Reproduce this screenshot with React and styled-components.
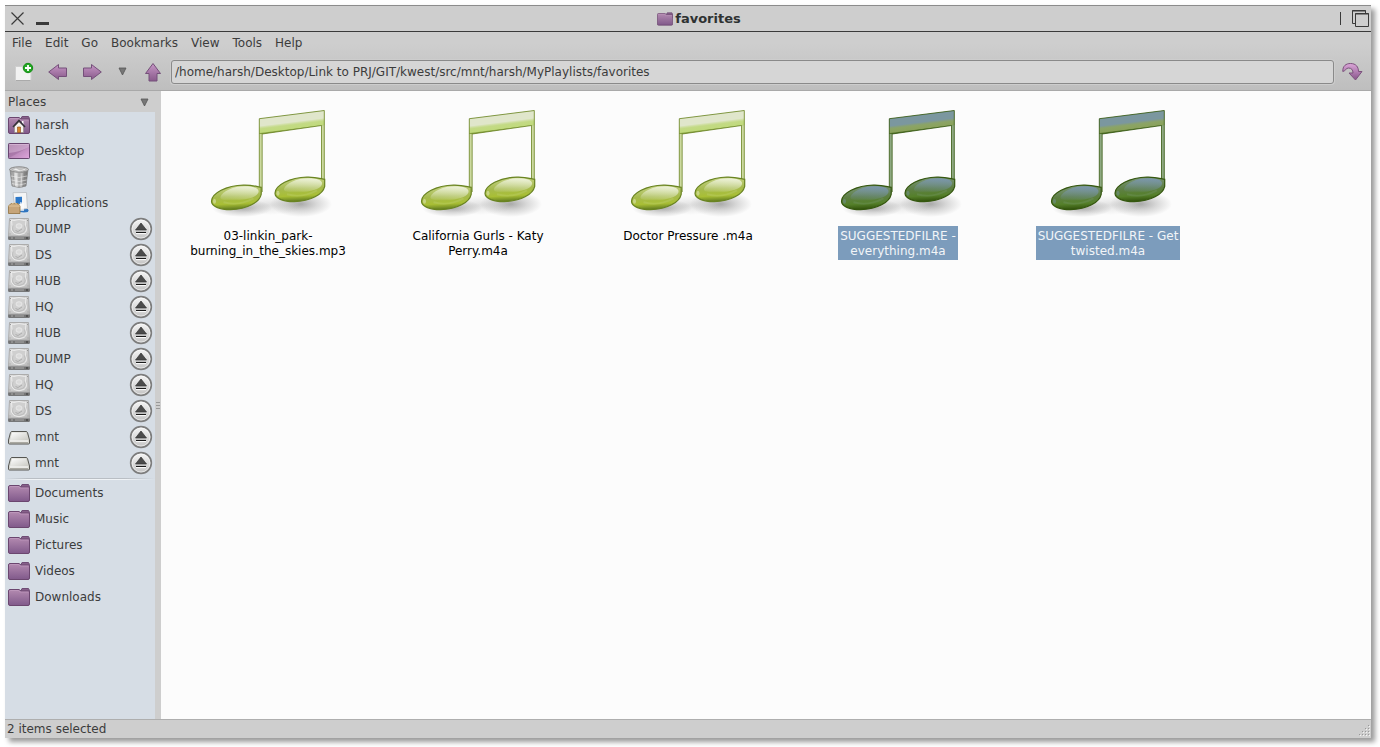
import React, { useId } from "react";
import styled, { createGlobalStyle } from "styled-components";

const GlobalStyle = createGlobalStyle`
  *, *::before, *::after { box-sizing: border-box; }
  body {
    margin: 0;
    background: #fff;
    color: #3c3c3c;
    font: 12px/15px "DejaVu Sans", Verdana, sans-serif;
  }
  button, input { font: inherit; color: inherit; }
`;

const Desktop = styled.div`
  display: flex;
  min-height: 100vh;
  padding: 5px 9px 9px 5px;
`;

const Window = styled.main`
  flex: 1;
  min-width: 0;
  display: flex;
  flex-direction: column;
  background: #cecece;
  box-shadow: 4px 4px 5px rgba(0, 0, 0, 0.4);
`;

const TitleBar = styled.header`
  display: flex;
  align-items: center;
  height: 27px;
  border-top: 1px solid #8c8c8c;
  border-bottom: 1px solid #3a3a3a;
`;

const WindowControls = styled.div`
  display: flex;
  align-items: center;
  flex: none;
  width: ${(p) => p.$width};
`;

const IconButton = styled.button`
  display: flex;
  align-items: center;
  justify-content: center;
  flex: none;
  width: ${(p) => p.$width || "25px"};
  height: ${(p) => p.$height || "24px"};
  padding: 0;
  border: 0;
  background: none;
`;

const Title = styled.h1`
  flex: 1;
  display: flex;
  align-items: center;
  justify-content: center;
  gap: 2px;
  margin: 0;
  font-size: 13px;
  line-height: 16px;
  font-weight: bold;
  color: #2e3232;
`;

const Chrome = styled.div`
  background: linear-gradient(#cecece 20%, #bebebe);
  border-bottom: 1px solid #a9a9a9;
`;

const MenuBar = styled.nav`
  display: flex;
  height: 22px;
  padding-left: 1px;
`;

const MenuButton = styled.button`
  padding: 0 7px 0 6px;
  border: 0;
  background: none;
`;

const ToolBar = styled.div`
  display: flex;
  align-items: center;
  height: 36px;
  padding: 0 0 1px 2px;
`;

const PathInput = styled.input`
  flex: 1;
  min-width: 0;
  height: 24px;
  margin-left: 1px;
  padding: 0 3px;
  border: 1px solid #8a8a8a;
  border-radius: 3px;
  background: #d6d6d6;
  outline: 0;
  box-shadow: 0 0 0 1px #cdcdcd;
`;

const Content = styled.div`
  flex: 1;
  display: flex;
`;

const SidePane = styled.aside`
  flex: none;
  width: 156px;
  display: flex;
  flex-direction: column;
`;

const SideHeader = styled.div`
  display: flex;
  align-items: center;
  justify-content: space-between;
  height: 21px;
  padding: 1px 4px 0 3px;
`;

const SideBody = styled.div`
  flex: 1;
  display: flex;
`;

const Places = styled.ul`
  flex: 1;
  margin: 0;
  padding: 0;
  list-style: none;
  background: #d6dde5;
`;

const PlaceRow = styled.li`
  display: flex;
  align-items: center;
  height: 26px;
  padding: 0 2px 0 3px;
`;

const PlaceLink = styled.a`
  flex: 1;
  display: flex;
  align-items: center;
  gap: 5px;
  color: inherit;
  text-decoration: none;
`;

const PlaceSeparator = styled.li`
  height: 4px;
  padding-top: 2px;

  &::before {
    content: "";
    display: block;
    height: 2px;
    background: linear-gradient(90deg, transparent, #b9bec4 15%, #b9bec4 80%, transparent) top / 100% 1px no-repeat,
      linear-gradient(90deg, transparent, #f0f3f6 15%, #f0f3f6 80%, transparent) bottom / 100% 1px no-repeat;
  }
`;

const Splitter = styled.div`
  width: 6px;
  display: flex;
  flex-direction: column;
  align-items: center;
  justify-content: center;
  gap: 2px;
  padding-bottom: 20px;
`;

const Grip = styled.span`
  width: 4px;
  height: 1px;
  background: #999;
`;

const Files = styled.ul`
  flex: 1;
  display: flex;
  flex-wrap: wrap;
  align-content: flex-start;
  margin: 0;
  padding: 7px 2px;
  list-style: none;
  background: #fcfcfc;
`;

const FileItem = styled.li`
  width: 210px;
  display: flex;
  flex-direction: column;
  align-items: center;
`;

const FileLabel = styled.span`
  padding: 3px 2px 1px;
  text-align: center;
  white-space: pre-line;
  color: ${(p) => (p.$selected ? "#f2f5f8" : "#000")};
  background: ${(p) => (p.$selected ? "#7c9cbc" : "transparent")};
`;

const StatusBar = styled.footer`
  display: flex;
  align-items: center;
  justify-content: space-between;
  height: 19px;
  padding-left: 2px;
  border-top: 1px solid #aeaeae;
`;

function Folder({ size = 22, home }) {
  const id = useId();
  return (
    <svg width={size} height={size} viewBox="0 0 22 22" aria-hidden="true">
      <defs>
        <linearGradient id={id} x1="0" y1="0" x2="0" y2="1">
          <stop offset="0" stopColor="#b48bb1" />
          <stop offset="1" stopColor="#80598a" />
        </linearGradient>
      </defs>
      <path d="M12.5 5.500 14 2.500h6.500l1 2V9h-9z" fill="#87608a" stroke="#6f4d75" />
      <path d="M.5 5Q.5 3.500 2 3.500H11L13 5H20.500Q21.500 5 21.500 6V18Q21.500 19.500 20 19.500H2Q.5 19.500.5 18Z" fill={`url(#${id})`} stroke="#6b466f" />
      <path d="M1.500 5.500Q1.500 4.500 2.500 4.500H10.500L12.500 6H20.500" fill="none" stroke="#c9a6c8" strokeOpacity=".5" />
      {home && (
        <g>
          <path d="M7 12 11 8l4.500 4v6.500H6.500V12z" fill="#f5f3ee" stroke="#8d8780" strokeWidth=".6" />
          <path d="M14 7h1.500v4H14z" fill="#fff" />
          <path d="m5 13 6-6.500 6 6.500" fill="none" stroke="#35333a" strokeWidth="1.600" />
          <path d="M9.500 13h3v5.500h-3z" fill="#d9842c" stroke="#8a4b12" strokeWidth=".6" />
        </g>
      )}
    </svg>
  );
}

function DesktopIcon() {
  const id = useId();
  return (
    <svg width="22" height="22" viewBox="0 0 22 22" aria-hidden="true">
      <defs>
        <linearGradient id={id} x1="0" y1="0" x2="1" y2="1">
          <stop offset="0" stopColor="#a678a5" />
          <stop offset=".5" stopColor="#bb8abb" />
          <stop offset="1" stopColor="#e0a5dd" />
        </linearGradient>
      </defs>
      <rect x=".5" y="3.500" width="21" height="15" rx=".8" fill={`url(#${id})`} stroke="#694670" />
      <path d="M1 4h20v3Q12 12 1 13z" fill="#fff" opacity=".18" />
      <path d="M1 13Q12 12 21 7L1 18z" fill="#7a4a80" opacity=".25" />
      <path d="M1.500 4.500h19" stroke="#d9b9d8" opacity=".8" />
    </svg>
  );
}

function TrashIcon() {
  const id = useId();
  return (
    <svg width="22" height="22" viewBox="0 0 22 22" aria-hidden="true">
      <defs>
        <linearGradient id={id}>
          <stop offset="0" stopColor="#888" />
          <stop offset=".3" stopColor="#dcdcdc" />
          <stop offset=".6" stopColor="#b0b0b0" />
          <stop offset="1" stopColor="#6c6c6c" />
        </linearGradient>
      </defs>
      <path d="M2 3.500 4 20Q11 23 18 20L20 3.500Z" fill={`url(#${id})`} stroke="#808080" strokeWidth=".7" />
      <path d="M5 6 6.500 20M11 7v14M17 6l-1.500 14" fill="none" stroke="#777" strokeWidth=".8" opacity=".6" />
      <path d="M8 7 9 21M14 7l-1 14M3 10q8 3 16 0M3.500 14q7.500 3 15 0M4 17.500q7 3 14 0" fill="none" stroke="#f2f2f2" strokeWidth=".8" opacity=".7" />
      <ellipse cx="11" cy="3.500" rx="9.500" ry="2.700" fill="#c4c4c4" stroke="#8a8a8a" />
      <path d="M4 3.500 8 2l4 2 5-1.500 1 1.500-7 1.500z" fill="#efefef" stroke="#a5a5a5" strokeWidth=".5" />
    </svg>
  );
}

function ApplicationsIcon() {
  return (
    <svg width="22" height="22" viewBox="0 0 22 22" aria-hidden="true">
      <ellipse cx="16" cy="18.500" rx="5" ry="2.500" fill="#2f75c0" stroke="#dfe7ef" />
      <path d="M5 .7 18.500.5 19.500 16.500 7 18z" fill="#f4f5f6" stroke="#c1c5ca" />
      <path d="m7.500 5 6.500-.3v7l-6.500.3z" fill="#2d78c8" />
      <path d="m12 10 4 1v8h-4z" fill="#fdfdfd" opacity=".7" />
      <path d="M.5 14 3 11.500h7l2 2.500v7.500H.5z" fill="#c6a57a" stroke="#91713f" strokeWidth=".8" />
      <path d="M.5 14H12M3.500 12Q6.500 9.500 9 12" fill="none" stroke="#e8cfa5" strokeWidth=".8" />
    </svg>
  );
}

function DriveIcon() {
  const id = useId();
  return (
    <svg width="22" height="22" viewBox="0 0 22 22" aria-hidden="true">
      <defs>
        <linearGradient id={id} x1="0" y1="0" x2="1" y2="1">
          <stop offset="0" stopColor="#dcdcdc" />
          <stop offset="1" stopColor="#bdbdbd" />
        </linearGradient>
      </defs>
      <path d="M.5 18.500h21V21q0 .7-.7.7H1.200Q.5 21.700.5 21z" fill="#747474" stroke="#606060" strokeWidth=".6" />
      <path d="M1.500.5h19l1 17.500H.5z" fill={`url(#${id})`} stroke="#acacac" />
      <path d="M3.500 2Q6 3 8 2q3-1 6 0 3 1 4 0l-.5 5.500Q20 13 16 15.500q-5 2.500-10 0Q2 12.500 4 7.500z" fill="#cfcfcf" stroke="#efefef" strokeWidth=".9" />
      <path d="M5 7.500q-1.500 5 2 7 4.500 2 8.500-.5 3-3 1-6.500" fill="none" stroke="#b3b3b3" strokeWidth=".7" />
      <ellipse cx="11" cy="8" rx="3" ry="2.300" fill="#dadada" stroke="#eee" strokeWidth=".7" />
      <path d="m7.500 12.500 2.500 1 4-2.500" fill="none" stroke="#a8a8a8" strokeWidth=".9" />
      <path d="M3 20h2M7 20h9" stroke="#a9a9a9" />
      <path d="M18 20h2" stroke="#333" />
      <path d="M2 2.500h1M19 2.500h1M1.500 16h1M19.500 16h1" stroke="#979797" />
    </svg>
  );
}

function MountIcon() {
  const id = useId();
  return (
    <svg width="22" height="22" viewBox="0 0 22 22" aria-hidden="true">
      <defs>
        <linearGradient id={id} x1="0" y1="0" x2="1" y2="1">
          <stop offset="0" stopColor="#fff" />
          <stop offset="1" stopColor="#c9c9c3" />
        </linearGradient>
      </defs>
      <path d="M4 5.500H18q1 0 1.500 1l2 7.500v3q0 1-1 1h-19q-1 0-1-1v-3l2-7.500q.5-1 1.500-1z" fill="#d5d5cf" stroke="#565652" />
      <path d="M4 6.500h14l2 8H2z" fill={`url(#${id})`} />
      <path d="M2 15h18" stroke="#fff" />
      <path d="M2 16.500h18" stroke="#aaa9a2" />
    </svg>
  );
}

function EjectIcon() {
  const id = useId();
  return (
    <svg width="24" height="24" viewBox="0 0 24 24" aria-hidden="true">
      <defs>
        <linearGradient id={id} x1="0" y1="0" x2="0" y2="1">
          <stop offset="0" stopColor="#f6f6f6" />
          <stop offset="1" stopColor="#c3c3c3" />
        </linearGradient>
      </defs>
      <circle cx="12" cy="12" r="10.300" fill={`url(#${id})`} stroke="#7d7d7d" strokeWidth="1.700" />
      <circle cx="12" cy="12" r="9" fill="none" stroke="#fff" opacity=".5" />
      <path d="m12 6 5.500 7h-11z" fill="#4b4b4b" stroke="#333" strokeWidth=".7" />
      <path d="M7 15.500h10" stroke="#1b1b1b" strokeWidth="1.200" />
      <path d="M7 16.600h10" stroke="#fff" />
    </svg>
  );
}

function ArrowIcon({ direction }) {
  const id = useId();
  const paths = {
    left: "M.7 10 10.500 2.500V6H18.500V14.500H10.500V17.500z",
    right: "M19.300 10 9.500 2.500V6H1.500V14.500H9.500V17.500z",
    up: "M10 1.500 17.500 11.500H14V19H6V11.500H2.500z",
  };
  return (
    <svg width="20" height="20" viewBox="0 0 20 20" aria-hidden="true">
      <defs>
        <linearGradient id={id} x1="0" y1="0" x2="0" y2="1">
          <stop offset="0" stopColor="#c697c5" />
          <stop offset="1" stopColor="#895a8b" />
        </linearGradient>
      </defs>
      <path d={paths[direction]} fill={`url(#${id})`} stroke="#75507a" strokeLinejoin="round" />
    </svg>
  );
}

function NewTabIcon() {
  return (
    <svg width="22" height="22" viewBox="0 0 22 22" aria-hidden="true">
      <path d="M2.500 5.500h7L10.500 8H18v10.500q0 1-1 1H3.500q-1 0-1-1z" fill="#f2f2f2" stroke="#cfcfcf" />
      <path d="M3 19.500h14.500" stroke="#aaa" />
      <circle cx="15" cy="7" r="4.700" fill="#21a821" stroke="#158b15" />
      <path d="M15 4v6M12 7h6" stroke="#fff" strokeWidth="1.800" />
    </svg>
  );
}

function GoIcon() {
  const id = useId();
  return (
    <svg width="22" height="22" viewBox="0 0 22 22" aria-hidden="true">
      <defs>
        <linearGradient id={id} x1="0" y1="0" x2="0" y2="1">
          <stop offset="0" stopColor="#dca7d9" />
          <stop offset="1" stopColor="#865489" />
        </linearGradient>
      </defs>
      <path d="M.8 10.500C.5 5 4 2.500 8.500 2.500c5.500 0 8 3.500 8 8H20L13.500 19 7 12h4c0-3-1.500-5-4.500-5C4 7 3.500 10 .8 10.500z" fill={`url(#${id})`} stroke="#7b527c" strokeLinejoin="round" />
    </svg>
  );
}

function CaretIcon() {
  return (
    <svg width="9" height="9" viewBox="0 0 9 9" aria-hidden="true">
      <path d="M1 1h7L4.500 8z" fill="#777" stroke="#555" strokeWidth=".8" />
    </svg>
  );
}

function MusicIcon({ selected }) {
  const id = useId();
  const c = selected
    ? { edge: "#35570f", hi: "#7f9a80", mid: "#5e7f45", low: "#55802a", gloss: "#7b97b4", beam: "#7b979f", beamLow: "#8aa25c", stem: "#8fa982" }
    : { edge: "#698322", hi: "#c9d68c", mid: "#a6ba4e", low: "#a9bf35", gloss: "#f4f7e8", beam: "#e0e6cb", beamLow: "#c0da7c", stem: "#ccd9a0" };
  const url = (name) => `url(#${id}${name})`;
  return (
    <svg width="128" height="128" viewBox="0 0 128 128" role="img" aria-label="Audio file">
      <defs>
        <linearGradient id={`${id}head`} x1="0" y1="0" x2=".1" y2="1">
          <stop offset="0" stopColor={c.hi} />
          <stop offset=".5" stopColor={c.mid} />
          <stop offset=".8" stopColor={c.low} />
          <stop offset="1" stopColor={c.edge} />
        </linearGradient>
        <linearGradient id={`${id}gloss`} x1=".6" y1="0" x2=".4" y2="1">
          <stop offset="0" stopColor={c.gloss} stopOpacity=".85" />
          <stop offset="1" stopColor={c.gloss} stopOpacity=".12" />
        </linearGradient>
        <linearGradient id={`${id}beam`} gradientUnits="userSpaceOnUse" x1="87" y1="16" x2="89" y2="32">
          <stop offset="0" stopColor={c.beam} />
          <stop offset=".5" stopColor={c.beam} />
          <stop offset=".68" stopColor={c.beamLow} stopOpacity=".75" />
          <stop offset=".9" stopColor={c.beamLow} />
          <stop offset="1" stopColor={c.edge} />
        </linearGradient>
        <radialGradient id={`${id}shade`}>
          <stop offset="0" stopColor="#333" stopOpacity=".4" />
          <stop offset=".5" stopColor="#333" stopOpacity=".18" />
          <stop offset="1" stopColor="#333" stopOpacity="0" />
        </radialGradient>
      </defs>
      <ellipse cx="38" cy="110" rx="30" ry="9" fill={url("shade")} />
      <ellipse cx="97" cy="106" rx="31" ry="13" fill={url("shade")} />
      <ellipse cx="66" cy="107" rx="35" ry="10" fill={url("shade")} opacity=".35" />
      <path d="M55.300 20.700 120.300 12.500V88H117.500V27.300L58 36V95H55.300z" fill={c.stem} />
      <path d="M55.300 20.700 120.300 12.500V27L58 36H55.300z" fill={url("beam")} />
      <path d="M55.300 92V20.700L120.300 12.500V89M58.200 94V36L117.500 27.500V84" fill="none" stroke={c.edge} strokeWidth="1" opacity=".8" />
      {[[32.500, 99.300], [96, 91.300]].map(([x, y]) => (
        <g key={x} transform={`translate(${x} ${y})`}>
          <path d="M-25 4C-25-4-10-12 7-12.200C17-12.500 22-10 24.700-10V-3C23 5 11 11.800-6 12.300C-17 12.300-25 9-25 4z" fill={url("head")} stroke={c.edge} strokeWidth="1.200" />
          <path d="M-16-.5C-14-6-3-11 8-11C17-11 23-9 22-5C20 1 8 3-3 2.500C-10 2.500-17 3-16-.5z" fill={url("gloss")} />
          <path d="M-13 5Q2 9 17 1" fill="none" stroke={c.hi} strokeWidth="2" opacity=".25" />
          <ellipse cx="-22" cy="4" rx="1.500" ry="2.500" fill={c.gloss} opacity=".4" />
        </g>
      ))}
    </svg>
  );
}

const placeIcons = {
  home: <Folder home />,
  desktop: <DesktopIcon />,
  trash: <TrashIcon />,
  apps: <ApplicationsIcon />,
  drive: <DriveIcon />,
  mount: <MountIcon />,
  folder: <Folder />,
};

const places = [
  ["harsh", "home"],
  ["Desktop", "desktop"],
  ["Trash", "trash"],
  ["Applications", "apps"],
  ...["DUMP", "DS", "HUB", "HQ", "HUB", "DUMP", "HQ", "DS"].map((n) => [n, "drive"]),
  ["mnt", "mount"],
  ["mnt", "mount"],
];
const bookmarks = ["Documents", "Music", "Pictures", "Videos", "Downloads"];
const menus = ["File", "Edit", "Go", "Bookmarks", "View", "Tools", "Help"];
const files = [
  { name: "03-linkin_park-\nburning_in_the_skies.mp3" },
  { name: "California Gurls - Katy\nPerry.m4a" },
  { name: "Doctor Pressure .m4a" },
  { name: "SUGGESTEDFILRE -\neverything.m4a", selected: true },
  { name: "SUGGESTEDFILRE - Get\ntwisted.m4a", selected: true },
];

function Place({ name, icon }) {
  const ejectable = icon === "drive" || icon === "mount";
  return (
    <PlaceRow>
      <PlaceLink href="#">
        {placeIcons[icon]}
        {name}
      </PlaceLink>
      {ejectable && (
        <IconButton $width="24px" aria-label={`Eject ${name}`}>
          <EjectIcon />
        </IconButton>
      )}
    </PlaceRow>
  );
}

export default function App() {
  return (
    <Desktop>
      <GlobalStyle />
      <Window>
        <TitleBar>
          <WindowControls $width="56px">
            <IconButton aria-label="Close">
              <svg width="13" height="13" viewBox="0 0 13 13" aria-hidden="true">
                <path d="m.5.5 12 12m0-12-12 12" stroke="#3a3a3a" strokeWidth="1.200" />
              </svg>
            </IconButton>
            <IconButton aria-label="Minimize">
              <svg width="13" height="13" viewBox="0 0 13 13" aria-hidden="true">
                <path d="M0 10h13v3H0z" fill="#3a3a3a" />
              </svg>
            </IconButton>
          </WindowControls>
          <Title>
            <Folder size={16} />
            favorites
          </Title>
          <WindowControls $width="34px">
            <IconButton $width="6px" aria-label="Shade">
              <svg width="1" height="13" viewBox="0 0 1 13" aria-hidden="true">
                <path d="M0 0h1v13H0z" fill="#3a3a3a" />
              </svg>
            </IconButton>
            <IconButton $width="34px" aria-label="Maximize">
              <svg width="17" height="17" viewBox="0 0 17 17" aria-hidden="true">
                <path d="M3 13.500H.5V.5h13V3M3.500 3.500h13v13h-13zM0 1h14M3 4h14" fill="none" stroke="#3a3a3a" />
              </svg>
            </IconButton>
          </WindowControls>
        </TitleBar>

        <Chrome>
          <MenuBar aria-label="Main menu">
            {menus.map((m) => (
              <MenuButton key={m}>{m}</MenuButton>
            ))}
          </MenuBar>
          <ToolBar>
            <IconButton $width="34px" aria-label="New tab"><NewTabIcon /></IconButton>
            <IconButton $width="34px" aria-label="Back"><ArrowIcon direction="left" /></IconButton>
            <IconButton $width="34px" aria-label="Forward"><ArrowIcon direction="right" /></IconButton>
            <IconButton $width="27px" aria-label="History"><CaretIcon /></IconButton>
            <IconButton $width="34px" aria-label="Up"><ArrowIcon direction="up" /></IconButton>
            <PathInput
              aria-label="Location"
              defaultValue="/home/harsh/Desktop/Link to PRJ/GIT/kwest/src/mnt/harsh/MyPlaylists/favorites"
            />
            <IconButton $width="37px" aria-label="Go to location"><GoIcon /></IconButton>
          </ToolBar>
        </Chrome>

        <Content>
          <SidePane>
            <SideHeader>
              Places
              <IconButton $height="20px" aria-label="Choose side pane"><CaretIcon /></IconButton>
            </SideHeader>
            <SideBody>
              <Places>
                {places.map(([name, icon], i) => (
                  <Place key={i} name={name} icon={icon} />
                ))}
                <PlaceSeparator role="separator" />
                {bookmarks.map((name) => (
                  <Place key={name} name={name} icon="folder" />
                ))}
              </Places>
              <Splitter>
                <Grip />
                <Grip />
                <Grip />
              </Splitter>
            </SideBody>
          </SidePane>
          <Files>
            {files.map((f) => (
              <FileItem key={f.name}>
                <MusicIcon selected={f.selected} />
                <FileLabel $selected={f.selected}>{f.name}</FileLabel>
              </FileItem>
            ))}
          </Files>
        </Content>

        <StatusBar>
          2 items selected
          <svg width="12" height="16" viewBox="0 0 12 16" aria-hidden="true">
            {[[9, 4], [6, 7], [9, 7], [3, 10], [6, 10], [9, 10], [0, 13], [3, 13], [6, 13], [9, 13]].map(([x, y]) => (
              <g key={`${x}-${y}`}>
                <path d={`M${x + 1} ${y + 1}h1v1h-1z`} fill="#f2f2f2" />
                <path d={`M${x} ${y}h1v1h-1z`} fill="#989898" />
              </g>
            ))}
          </svg>
        </StatusBar>
      </Window>
    </Desktop>
  );
}
